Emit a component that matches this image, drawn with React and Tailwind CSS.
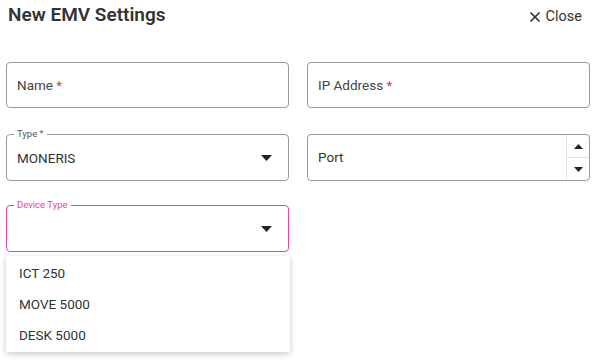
import { X } from 'lucide-react';

const Caret = ({ className = '' }) => (
  <svg width="11" height="6" viewBox="0 0 11 6" className={className}>
    <path d="M0 0 L11 0 L5.5 6 Z" fill="#222" />
  </svg>
);

const TextField = ({ label }) => (
  <div className="h-[46px] border border-[#9c9c9c] rounded-[4px] flex items-center px-[10px]">
    <span className="text-[13.5px] text-[#444]">
      {label} <span className="text-[#e53935]">*</span>
    </span>
  </div>
);

const SelectField = ({ label, value, required, active }) => (
  <div
    className={
      'relative h-[47px] rounded-[4px] flex items-center pl-[10px] pr-[16px] ' +
      (active ? 'border-[1.5px] border-[#e4489c]' : 'border border-[#9c9c9c]')
    }
  >
    <span
      className={
        'absolute -top-[7px] left-[7px] bg-white px-[3px] text-[9.5px] leading-[12px] ' +
        (active ? 'text-[#e4489c]' : 'text-[#555]')
      }
    >
      {label}
      {required && <span className="text-[#e53935]"> *</span>}
    </span>
    <span className="flex-1 text-[13.5px] text-[#333] pt-[2px]">{value}</span>
    <Caret />
  </div>
);

export default function App() {
  const options = ['ICT 250', 'MOVE 5000', 'DESK 5000'];
  return (
    <div className="w-[598px] h-[363px] bg-white overflow-hidden" style={{ fontFamily: 'Roboto, "Liberation Sans", sans-serif' }}>
      <div className="flex items-start justify-between pl-[8px] pr-[16px] pt-[2px] h-[62px]">
        <h1 className="text-[19px] font-semibold text-[#333] leading-[26px]">New EMV Settings</h1>
        <button className="flex items-center gap-[3px] text-[14.5px] text-[#333] mt-[4px]">
          <X size={16} strokeWidth={2.6} />
          Close
        </button>
      </div>

      <div className="grid grid-cols-2 gap-x-[18px] pl-[6px] pr-[8px]">
        <TextField label="Name" />
        <TextField label="IP Address" />

        <div className="mt-[26px]">
          <SelectField label="Type" value="MONERIS" required />
        </div>
        <div className="mt-[26px] h-[47px] border border-[#9c9c9c] rounded-[4px] flex">
          <span className="flex-1 flex items-center px-[10px] text-[13.5px] text-[#333]">Port</span>
          <div className="w-[23px] border-l border-[#e2e2e2] flex flex-col">
            <div className="flex-1 flex items-center justify-center border-b border-[#e2e2e2]">
              <svg width="9" height="5" viewBox="0 0 9 5"><path d="M0 5 L9 5 L4.5 0 Z" fill="#222" /></svg>
            </div>
            <div className="flex-1 flex items-center justify-center">
              <svg width="9" height="5" viewBox="0 0 9 5"><path d="M0 0 L9 0 L4.5 5 Z" fill="#222" /></svg>
            </div>
          </div>
        </div>

        <div className="mt-[24px] relative">
          <SelectField label="Device Type" value="" active />
          <div className="absolute left-0 top-[51px] w-[284px] h-[96px] bg-white shadow-[0_2px_6px_rgba(0,0,0,0.22)] rounded-[2px] flex flex-col py-[2px] z-10">
            {options.map((o) => (
              <div key={o} className="h-[32px] flex items-center px-[13px] text-[13.5px] text-[#333]">
                {o}
              </div>
            ))}
          </div>
        </div>
      </div>
    </div>
  );
}
